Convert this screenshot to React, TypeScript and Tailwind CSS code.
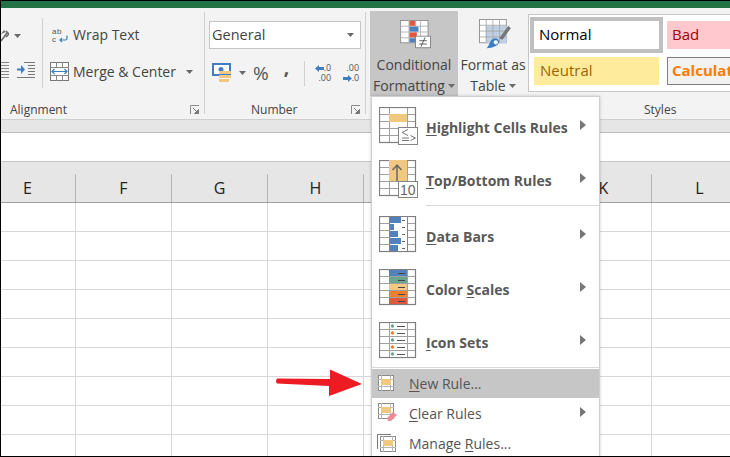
import React from 'react';

const FONT = "font-['Open_Sans','Liberation_Sans',sans-serif]";
const COLS = ['E', 'F', 'G', 'H', '', '', 'K', 'L'];
const ROWS = [0, 1, 2, 3, 4, 5, 6, 7, 8];

const Caret = ({ className = '' }: { className?: string }) => (
  <svg width="7" height="4" viewBox="0 0 7 4" className={className}>
    <path d="M0 0h7L3.5 4z" fill="#6a6a6a" />
  </svg>
);

const Launcher = () => (
  <svg width="10" height="10" viewBox="0 0 10 10">
    <path d="M.5 9V.5H9" fill="none" stroke="#8a8a8a" />
    <path d="M3 3l4.5 4.5M8.5 4.5v4h-4z" fill="#777" stroke="#777" />
  </svg>
);

const GroupLabel = ({ children }: { children: React.ReactNode }) => (
  <div className="h-[16px] text-[12px] leading-[16px] text-[#444]">{children}</div>
);

// grid drawn by all the rule icons, 37x35 at x,y
const IconGrid = ({ inner = true }: { inner?: boolean }) => (
  <g fill="none">
    {inner && <path d="M0 7.5h37M0 14.5h37M0 21.500h37M0 28.500h37" stroke="#a0a0a0" />}
    <path d="M10.500 0v35M28.500 0v35" stroke="#a0a0a0" />
    <rect x="0.500" y="0.500" width="36" height="35" stroke="#7f7f7f" strokeWidth="1.200" />
  </g>
);

const HighlightIcon = () => (
  <svg width="40" height="38" viewBox="0 0 40 38">
    <IconGrid />
    <rect x="10" y="7" width="18" height="8" fill="#f1c87f" />
    <rect x="19.500" y="20.500" width="19" height="17" fill="#fff" stroke="#848484" />
    <path d="M29 22.500l-6 3 6 3M23 31h7M23 33.500h7M31.500 28.500l5 2.500-5 2.500" fill="none" stroke="#777" />
  </svg>
);

const TopBottomIcon = () => (
  <svg width="40" height="38" viewBox="0 0 40 38">
    <IconGrid />
    <rect x="10" y="0" width="18" height="21" fill="#f1c87f" />
    <path d="M18 21V5M13.500 10L18 5l4.500 5" fill="none" stroke="#666" strokeWidth="1.500" />
    <rect x="19.500" y="21.500" width="19" height="16" fill="#fff" stroke="#848484" />
    <text x="21" y="35" fontSize="14" fill="#666" fontFamily="Liberation Sans, sans-serif">10</text>
  </svg>
);

const DataBarsIcon = () => (
  <svg width="40" height="38" viewBox="0 0 40 38">
    <IconGrid />
    <rect x="10" y="1" width="18" height="34" fill="#fff" />
    {[12, 5, 9, 12, 9].map((w, i) => (
      <g key={i}>
        <rect x="10" y={1 + i * 7} width={w} height="6" fill="#5182bd" />
        <path d={`M23 ${4.5 + i * 7}h3`} stroke="#666" />
      </g>
    ))}
    <path d="M10.500 0v35M28.500 0v35" stroke="#848484" />
  </svg>
);

const ColorScalesIcon = () => (
  <svg width="40" height="38" viewBox="0 0 40 38">
    <IconGrid />
    {['#5182bd', '#6aa58f', '#f2c885', '#f07e2f', '#e2583e'].map((c, i) => (
      <g key={c}>
        <rect x="10" y={1 + i * 7} width="18" height="6" fill={c} />
        <path d={`M19 ${4.5 + i * 7}h7`} stroke="#444" />
      </g>
    ))}
  </svg>
);

const IconSetsIcon = () => (
  <svg width="40" height="38" viewBox="0 0 40 38">
    <IconGrid />
    {['#6aa58f', '#f07e2f', '#6aa58f', '#f07e2f', '#6aa58f'].map((c, i) => (
      <g key={i}>
        <rect x="11" y={1 + i * 7} width="17" height="6" fill="#fff" />
        <circle cx="13.500" cy={4 + i * 7} r="1.700" fill={c} />
        <path d={`M18 ${4.5 + i * 7}h8`} stroke="#555" />
      </g>
    ))}
  </svg>
);

const SmallRuleIcon = () => (
  <g>
    <rect x="0.500" y="0.500" width="15" height="15" fill="#fff" stroke="#8a8a8a" />
    <path d="M0 4.500h16M0 11.500h16M3.500 0v16M12.500 0v16" stroke="#b5b5b5" />
    <rect x="3" y="4" width="10" height="6" fill="#f1c87f" />
  </g>
);

const Rule = ({ icon, label, hot, bold, arrow, on }: { icon: React.ReactNode; label: string; hot: number; bold?: boolean; arrow?: boolean; on?: boolean }) => (
  <div className={`flex items-center ${bold ? 'h-[53px]' : on ? 'h-[29px]' : 'h-[30px]'} ${on ? 'bg-[#c6c6c6]' : ''}`}>
    <div className={bold ? 'w-[54px] pl-[7px]' : 'w-[37px] pl-[6px]'}>{icon}</div>
    <span className={`${bold ? 'pt-[4px] text-[14px] font-bold text-[#595959]' : 'text-[14px] text-[#555]'} whitespace-nowrap`}>
      {label.slice(0, hot)}
      <span className="underline underline-offset-2">{label[hot]}</span>
      {label.slice(hot + 1)}
    </span>
    {arrow && (
      <svg width="6" height="10" viewBox="0 0 6 10" className="ml-auto mr-[13px] -mt-[2px]">
        <path d="M0 0l6 5-6 5z" fill="#777" />
      </svg>
    )}
  </div>
);

const RuleMenu = () => (
  <div className="absolute left-[370px] top-[95px] z-10 h-[370px] w-[229px] border border-[#cfcfcf] bg-white pt-[2px] shadow-[0_0_3px_rgba(0,0,0,0.2)]">
    <Rule bold arrow icon={<HighlightIcon />} label="Highlight Cells Rules" hot={0} />
    <Rule bold arrow icon={<TopBottomIcon />} label="Top/Bottom Rules" hot={0} />
    <div className="ml-[54px] h-px bg-[#d9d9d9]" />
    <div className="pt-[2px]">
      <Rule bold arrow icon={<DataBarsIcon />} label="Data Bars" hot={0} />
      <Rule bold arrow icon={<ColorScalesIcon />} label="Color Scales" hot={6} />
      <Rule bold arrow icon={<IconSetsIcon />} label="Icon Sets" hot={0} />
    </div>
    <div className="h-px bg-[#d9d9d9]" />
    <div className="pt-px">
      <Rule on label="New Rule..." hot={0} icon={
        <svg width="17" height="17" viewBox="0 0 17 17"><SmallRuleIcon /></svg>
      } />
      <Rule arrow label="Clear Rules" hot={0} icon={
        <svg width="21" height="20" viewBox="0 0 21 20">
          <SmallRuleIcon />
          <path d="M9 15l6-6 4 3-6 6h-3z" fill="#f08a96" />
        </svg>
      } />
      <Rule label="Manage Rules..." hot={7} icon={
        <svg width="21" height="20" viewBox="0 0 21 20" className="-ml-[1px]">
          <path d="M.5 16V1.500H14" fill="none" stroke="#777" />
          <g transform="translate(3 3)"><SmallRuleIcon /></g>
        </svg>
      } />
    </div>
  </div>
);

const Ribbon = () => (
  <div className="flex h-[112px] shrink-0 border-b border-[#cfcfcf] bg-[#f3f3f3] pt-[4px] text-[#444]">
    {/* Alignment */}
    <div className="box-content flex h-[102px] w-[203px] shrink-0 flex-col border-r border-[#d0d0d0]">
      <div className="flex h-[90px] shrink-0">
        <div className="mt-[6px] h-[70px] w-[42px] shrink-0 border-r border-[#d0d0d0]">
          <div className="flex h-[33px] items-center gap-[6px] pt-[2px]">
            <svg width="8" height="14" viewBox="0 0 8 14">
              <path d="M0 12L6 4M5 2l3 3-3 3" fill="none" stroke="#666" strokeWidth="1.500" />
              <path d="M0 5l3-4 2 2z" fill="#777" />
            </svg>
            <Caret className="-ml-[1px] mt-px" />
          </div>
          <div className="flex h-[37px] items-center gap-[8px]">
            <svg width="8" height="16" viewBox="0 0 8 16">
              <path d="M0 .5h8M0 3.500h8M0 6.500h8M0 9.500h8M0 12.500h8M0 15.500h8" stroke="#888" />
            </svg>
            <svg width="18" height="16" viewBox="0 0 18 16">
              <path d="M7 .5h11M11 3.500h7M11 6.500h7M11 9.500h7M11 12.500h7M0 15.500h18" stroke="#777" />
              <path d="M0 6.500h4V3l4 4.500-4 4.500V8.500H0z" fill="#3f7fc1" />
            </svg>
          </div>
        </div>
        <div className="flex min-w-0 flex-1 flex-col pl-[7px] pt-[4px] text-[14px]">
          <div className="flex h-[37px] items-center gap-[5px] pl-[2px]">
            <svg width="16" height="16" viewBox="0 0 16 16">
              <text x="0" y="6.500" fontSize="8" letterSpacing="0.500" fill="#555" fontFamily="Liberation Sans, sans-serif">ab</text>
              <text x="0" y="15" fontSize="8" fill="#555" fontFamily="Liberation Sans, sans-serif">c</text>
              <path d="M15 8.500v3q0 1.500-1.500 1.500H8M10 11l-2 2 2 2" fill="none" stroke="#3f7fc1" strokeWidth="1.200" />
            </svg>
            <span>Wrap Text</span>
          </div>
          <div className="flex h-[37px] items-center gap-[4px]">
            <svg width="19" height="19" viewBox="0 0 19 19">
              <rect x="0.500" y="0.500" width="18" height="18" fill="#fff" stroke="#777" />
              <path d="M0 5.500h19M0 13.500h19M6.500 0v5M12.500 0v5M6.500 14v5M12.500 14v5" stroke="#888" />
              <path d="M2 9.500h15M4.500 7L2 9.500 4.500 12M14.500 7L17 9.500 14.500 12" fill="none" stroke="#3f7fc1" strokeWidth="1.200" />
            </svg>
            <span className="whitespace-nowrap">Merge &amp; Center</span>
            <Caret className="ml-[6px]" />
          </div>
        </div>
      </div>
      <div className="flex items-center justify-between pl-[9px] pr-[4px]">
        <GroupLabel>Alignment</GroupLabel>
        <Launcher />
      </div>
    </div>

    {/* Number */}
    <div className="box-content flex h-[102px] w-[160px] shrink-0 flex-col border-r border-[#d0d0d0]">
      <div className="h-[90px] shrink-0 px-[4px] pt-[9px]">
        <div className="flex h-[28px] w-[152px] items-center justify-between border border-[#c6c6c6] bg-white pl-[2px] pr-[6px] text-[14.500px]">
          <span>General</span>
          <Caret />
        </div>
        <div className="mt-[11px] flex h-[26px] items-center">
          <svg width="20" height="20" viewBox="0 0 20 20" className="ml-[3px]">
            <rect x="1" y="1" width="17" height="11" fill="#fff" stroke="#3f7fc1" strokeWidth="2" />
            <circle cx="9" cy="6.500" r="2.500" fill="#3f7fc1" />
            <rect x="7" y="8" width="12" height="3" fill="#f1c87f" />
            <rect x="7" y="12" width="12" height="3" fill="#f1c87f" />
            <rect x="7" y="16" width="10" height="3" fill="#f1c87f" />
          </svg>
          <Caret className="ml-[7px]" />
          <span className="ml-[7px] text-[19px] leading-none text-[#555]">%</span>
          <span className="ml-[15px] -mt-[11px] text-[19px] font-bold leading-none text-[#555]">,</span>
          <div className="ml-[15px] h-[25px] w-px bg-[#d0d0d0]" />
          <div className="ml-[9px] flex w-[17px] flex-col items-end text-[9px] leading-[10px] text-[#555]">
            <span className="flex h-[10px] items-center"><svg width="9" height="7" viewBox="0 0 9 7"><path d="M0 3.500L4 0v2h5v3H4v2z" fill="#3f7fc1" /></svg>.0</span>
            <span className="h-[10px]">.00</span>
          </div>
          <div className="ml-[11px] flex w-[17px] flex-col items-end text-[9px] leading-[10px] text-[#555]">
            <span className="h-[10px]">.00</span>
            <span className="flex h-[10px] items-center"><svg width="9" height="7" viewBox="0 0 9 7"><path d="M9 3.500L5 0v2H0v3h5v2z" fill="#3f7fc1" /></svg>.0</span>
          </div>
        </div>
      </div>
      <div className="flex items-center pr-[4px]">
        <div className="flex-1 pl-[46px]"><GroupLabel>Number</GroupLabel></div>
        <Launcher />
      </div>
    </div>

    {/* Styles */}
    <div className="flex h-[102px] min-w-0 flex-1 flex-col">
      <div className="flex h-[90px] shrink-0 pl-[4px]">
        <div className="-mt-px flex h-[85px] w-[88px] shrink-0 flex-col items-center bg-[#c6c6c6] pt-[9px] text-[14px] leading-[21px]">
          <svg width="38" height="35" viewBox="0 0 38 35" className="ml-[4px]">
            <rect x="0.500" y="0.500" width="33" height="27" fill="#fff" stroke="#848484" />
            <path d="M10.500 0v27M18.500 0v27M24.500 0v27M0 7.500h33M0 14.500h33M0 21.500h33" stroke="#aaa" />
            <rect x="11" y="1" width="7" height="6" fill="#e2583e" />
            <rect x="11" y="8" width="11" height="6" fill="#4f81bd" />
            <rect x="11" y="15" width="9" height="6" fill="#e2583e" />
            <rect x="11" y="22" width="7" height="5" fill="#4f81bd" />
            <rect x="18.500" y="19.500" width="18" height="14" fill="#fff" stroke="#777" />
            <path d="M23 25h9M23 29h9M25 32l5-11" fill="none" stroke="#444" />
          </svg>
          <div className="mt-[5px] flex flex-col items-center">
            <span>Conditional</span>
            <span className="flex items-center gap-[3px] whitespace-nowrap">Formatting <Caret /></span>
          </div>
        </div>
        <div className="-mt-px flex h-[85px] w-[70px] shrink-0 flex-col items-center pt-[8px] text-[14px] leading-[21px]">
          <svg width="38" height="36" viewBox="0 0 38 36" className="ml-[4px]">
            <rect x="0.500" y="0.500" width="32" height="28" fill="#fff" stroke="#848484" />
            <rect x="8" y="8" width="25" height="21" fill="#bed0e6" />
            <path d="M8.500 0v29M16.500 0v29M24.500 0v29M0 7.500h33M0 14.500h33M0 21.500h33" stroke="#a5a5a5" />
            <path d="M24 23L35 8l3 3-10 14z" fill="#777" />
            <path d="M9 35q2-2 4-7 2-5 7-5 4 1 4 5-3 7-15 7z" fill="#3f7fc1" />
            <circle cx="20" cy="28" r="2.500" fill="#fff" />
          </svg>
          <div className="mt-[5px] flex flex-col items-center">
            <span className="whitespace-nowrap">Format as</span>
            <span className="flex items-center gap-[3px]">Table <Caret /></span>
          </div>
        </div>
        <div className="mt-[2px] h-[78px] flex-1 border-y border-l border-[#c6c6c6] bg-white pl-[1px] pt-[2px] text-[15px]">
          <div className="flex gap-[4px]">
            <div className="flex h-[36px] w-[133px] shrink-0 items-center border-[4px] border-[#c0c0c0] pb-[2px] pl-[5px] text-black">Normal</div>
            <div className="mt-[4px] flex h-[28px] flex-1 items-center bg-[#ffc7ce] pb-[2px] pl-[5px] text-[#9c0006]">Bad</div>
          </div>
          <div className="mt-[4px] flex gap-[8px] pl-[4px]">
            <div className="flex h-[28px] w-[125px] shrink-0 items-center bg-[#ffeb9c] pb-[2px] pl-[6px] text-[#9c6500]">Neutral</div>
            <div className="flex h-[28px] flex-1 items-center overflow-hidden border border-r-0 border-[#7f7f7f] bg-[#f2f2f2] pb-[2px] pl-[4px] font-bold text-[#fa7d00]">Calculation</div>
          </div>
        </div>
      </div>
      <div className="pl-[278px]"><GroupLabel>Styles</GroupLabel></div>
    </div>
  </div>
);

const Sheet = () => (
  <div className="flex min-h-0 flex-1 flex-col">
    <div className="flex h-[41px] shrink-0 items-end border-b border-[#a0a0a0] bg-[#e6e6e6] text-[16px] text-[#222]">
      {COLS.map((c, i) => (
        <div key={i} className={`flex h-[28px] shrink-0 items-center border-r border-[#b4b4b4] ${i === 0 ? 'w-[75px] justify-start pl-[22px]' : 'w-[96px] justify-center'}`}>{c}</div>
      ))}
    </div>
    {ROWS.map((r) => (
      <div key={r} className="flex h-[29px] shrink-0">
        {COLS.map((c, i) => (
          <div key={i} className={`shrink-0 border-b border-r border-[#d8d8d8] ${i === 0 ? 'w-[75px]' : 'w-[96px]'}`} />
        ))}
      </div>
    ))}
  </div>
);

export default function App() {
  return (
    <div className={`relative flex h-[457px] w-[730px] flex-col overflow-hidden border-b border-l border-t border-black bg-white ${FONT}`}>
      <div className="h-[7px] shrink-0 bg-[#217346]" />
      <Ribbon />
      <div className="h-[13px] shrink-0 border-b border-[#bdbdbd] bg-[#e6e6e6]" />
      <div className="h-[29px] shrink-0 border-b border-[#c6c6c6] bg-white" />
      <Sheet />
      <RuleMenu />
      <svg width="90" height="30" viewBox="0 0 90 30" className="absolute left-[274px] top-[367px] z-20">
        <path d="M2 10.500L55 11V1.500L87 16 54 28V18L2 15.500q-2-2 0-5z" fill="#ed1c24" />
      </svg>
    </div>
  );
}
